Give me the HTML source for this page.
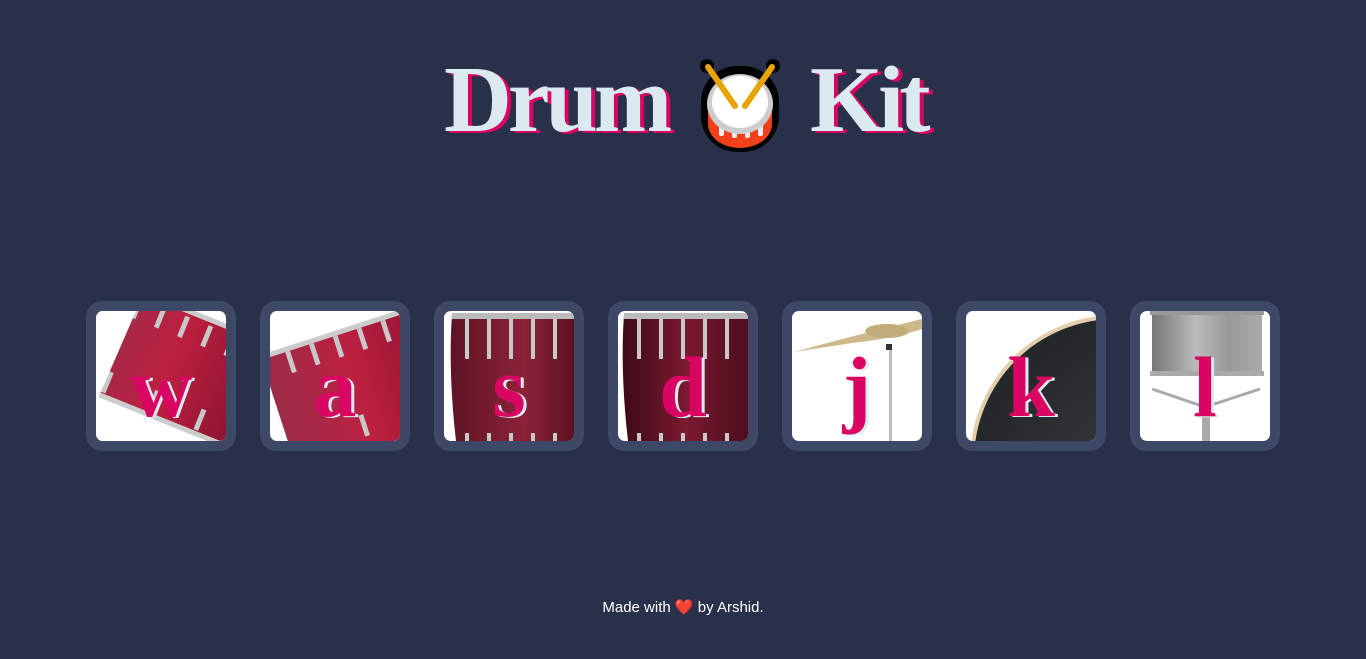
<!DOCTYPE html>
<html><head><meta charset="utf-8"><style>
html,body{margin:0;padding:0;background:#293049;width:1366px;height:659px;overflow:hidden;font-family:"Liberation Sans",sans-serif}
.t{position:absolute;top:53px;height:94px;font-family:"Liberation Serif",serif;font-weight:bold;font-size:94px;color:#dbe9f1;text-shadow:4px 2px 0 #da0463;line-height:94px;white-space:nowrap}
.ic{position:absolute;left:699px;top:58px}
.box{position:absolute;top:301px;width:150px;height:150px;background:#3d4766;border-radius:16px}
.in{position:absolute;left:10px;top:10px;width:130px;height:130px;background:#fff;border-radius:7px;overflow:hidden}
.in svg{position:absolute;left:0;top:0}
.k{position:absolute;left:0;top:33px;width:130px;text-align:center;font-family:"Liberation Serif",serif;font-weight:bold;font-size:86px;line-height:86px;color:#da0463;text-shadow:3px 1px 0 #dbe9f1}
.ft{position:absolute;top:598px;left:0;width:1366px;text-align:center;color:#fff;font-size:15px}
</style></head><body>
<div class="t" style="left:444px;letter-spacing:-4px">Drum</div>
<div class="t" style="left:810px;letter-spacing:-5px">Kit</div>
<svg class="ic" width="84" height="96" viewBox="0 0 84 96">
<rect x="2" y="8" width="78" height="86" rx="36" fill="#000"/>
<circle cx="8" cy="8" r="7" fill="#000"/><circle cx="74" cy="8" r="7" fill="#000"/>
<path d="M9 50 v16 a32 24 0 0 0 64 0 v-16z" fill="#f2401b"/>
<rect x="20" y="66" width="5" height="12" rx="2" fill="#eee"/><rect x="33" y="68" width="5" height="12" rx="2" fill="#eee"/><rect x="46" y="68" width="5" height="12" rx="2" fill="#eee"/><rect x="59" y="66" width="5" height="12" rx="2" fill="#eee"/>
<ellipse cx="41" cy="46" rx="33" ry="30" fill="#ccc"/><ellipse cx="41" cy="44" rx="28" ry="26" fill="#fff"/>
<path d="M9 9 L36 48 M73 9 L46 48" stroke="#e8a300" stroke-width="6" stroke-linecap="round"/>
</svg>

<svg width="0" height="0" style="position:absolute"><defs>
<linearGradient id="red" x1="0" x2="1"><stop offset="0" stop-color="#9c2d48"/><stop offset=".5" stop-color="#bd1f40"/><stop offset="1" stop-color="#8d1530"/></linearGradient>
<linearGradient id="mar" x1="0" x2="1"><stop offset="0" stop-color="#5e1423"/><stop offset=".6" stop-color="#8c2238"/><stop offset="1" stop-color="#5a1222"/></linearGradient>
<linearGradient id="mar2" x1="0" x2="1"><stop offset="0" stop-color="#3e0a16"/><stop offset=".5" stop-color="#7a1a30"/><stop offset="1" stop-color="#4c0d1c"/></linearGradient>
<radialGradient id="blk" cx=".9" cy=".9" r="1"><stop offset="0" stop-color="#4a4d4f"/><stop offset="1" stop-color="#252829"/></radialGradient>
<linearGradient id="sil" x1="0" x2="1"><stop offset="0" stop-color="#777"/><stop offset=".4" stop-color="#bbb"/><stop offset=".7" stop-color="#999"/><stop offset="1" stop-color="#aaa"/></linearGradient>
</defs></svg>

<div class="box" style="left:86px"><div class="in">
<svg width="130" height="130"><g transform="rotate(22 65 65)"><rect x="-10" y="-5" width="160" height="110" fill="url(#red)"/><rect x="-10" y="-8" width="160" height="5" fill="#ccc"/><rect x="-10" y="103" width="160" height="5" fill="#ccc"/>
<g fill="#c8c8c8"><rect x="15" y="0" width="5" height="22"/><rect x="40" y="0" width="5" height="22"/><rect x="65" y="0" width="5" height="22"/><rect x="90" y="0" width="5" height="22"/><rect x="115" y="0" width="5" height="22"/><rect x="15" y="80" width="5" height="22"/><rect x="65" y="80" width="5" height="22"/><rect x="115" y="80" width="5" height="22"/></g></g>
<path d="M0 0 H40 L0 92Z" fill="#fff"/><path d="M0 92 L0 130 H40Z" fill="#fff"/></svg>
<div class="k">w</div></div></div>

<div class="box" style="left:260px"><div class="in">
<svg width="130" height="130"><g transform="rotate(-18 65 65)"><rect x="0" y="25" width="170" height="120" fill="url(#red)"/><rect x="0" y="22" width="170" height="5" fill="#ccc"/>
<g fill="#c8c8c8"><rect x="25" y="27" width="5" height="22"/><rect x="50" y="27" width="5" height="22"/><rect x="75" y="27" width="5" height="22"/><rect x="100" y="27" width="5" height="22"/><rect x="125" y="27" width="5" height="22"/><rect x="75" y="110" width="5" height="22"/><rect x="125" y="110" width="5" height="22"/></g></g></svg>
<div class="k">a</div></div></div>

<div class="box" style="left:434px"><div class="in">
<svg width="130" height="130"><path d="M8 4 H130 V130 H12 Q4 60 8 4Z" fill="url(#mar)"/><rect x="8" y="2" width="122" height="6" fill="#bbb"/>
<g fill="#c8c8c8"><rect x="21" y="8" width="4" height="40"/><rect x="43" y="8" width="4" height="40"/><rect x="65" y="8" width="4" height="40"/><rect x="87" y="8" width="4" height="40"/><rect x="109" y="8" width="4" height="40"/><rect x="21" y="122" width="4" height="8"/><rect x="43" y="122" width="4" height="8"/><rect x="65" y="122" width="4" height="8"/><rect x="87" y="122" width="4" height="8"/><rect x="109" y="122" width="4" height="8"/></g></svg>
<div class="k">s</div></div></div>

<div class="box" style="left:608px"><div class="in">
<svg width="130" height="130"><path d="M6 4 H130 V130 H10 Q2 60 6 4Z" fill="url(#mar2)"/><rect x="6" y="2" width="124" height="6" fill="#bbb"/>
<g fill="#c8c8c8"><rect x="19" y="8" width="4" height="40"/><rect x="41" y="8" width="4" height="40"/><rect x="63" y="8" width="4" height="40"/><rect x="85" y="8" width="4" height="40"/><rect x="107" y="8" width="4" height="40"/><rect x="19" y="122" width="4" height="8"/><rect x="41" y="122" width="4" height="8"/><rect x="63" y="122" width="4" height="8"/><rect x="85" y="122" width="4" height="8"/><rect x="107" y="122" width="4" height="8"/></g></svg>
<div class="k">d</div></div></div>

<div class="box" style="left:782px"><div class="in">
<svg width="130" height="130"><rect x="97" y="35" width="3" height="95" fill="#bbb"/><path d="M2 41 Q60 25 130 8 V18 Q100 28 60 32Z" fill="#cdb98a"/><ellipse cx="95" cy="20" rx="22" ry="7" fill="#c2ad7a"/><rect x="94" y="33" width="6" height="6" fill="#333"/></svg>
<div class="k">j</div></div></div>

<div class="box" style="left:956px"><div class="in">
<svg width="130" height="130"><circle cx="150" cy="150" r="146" fill="#e3cfb0"/><circle cx="150" cy="150" r="142" fill="url(#blk)"/></svg>
<div class="k">k</div></div></div>

<div class="box" style="left:1130px"><div class="in">
<svg width="130" height="130"><rect x="62" y="70" width="8" height="60" fill="#aaa"/><path d="M12 78 L65 96 L120 78" stroke="#aaa" stroke-width="3" fill="none"/><rect x="12" y="2" width="110" height="62" fill="url(#sil)"/><rect x="10" y="0" width="114" height="4" fill="#999"/><rect x="10" y="60" width="114" height="5" fill="#aaa"/></svg>
<div class="k">l</div></div></div>

<div class="ft">Made with <span style="color:#e3102a">❤️</span> by Arshid.</div>
</body></html>
